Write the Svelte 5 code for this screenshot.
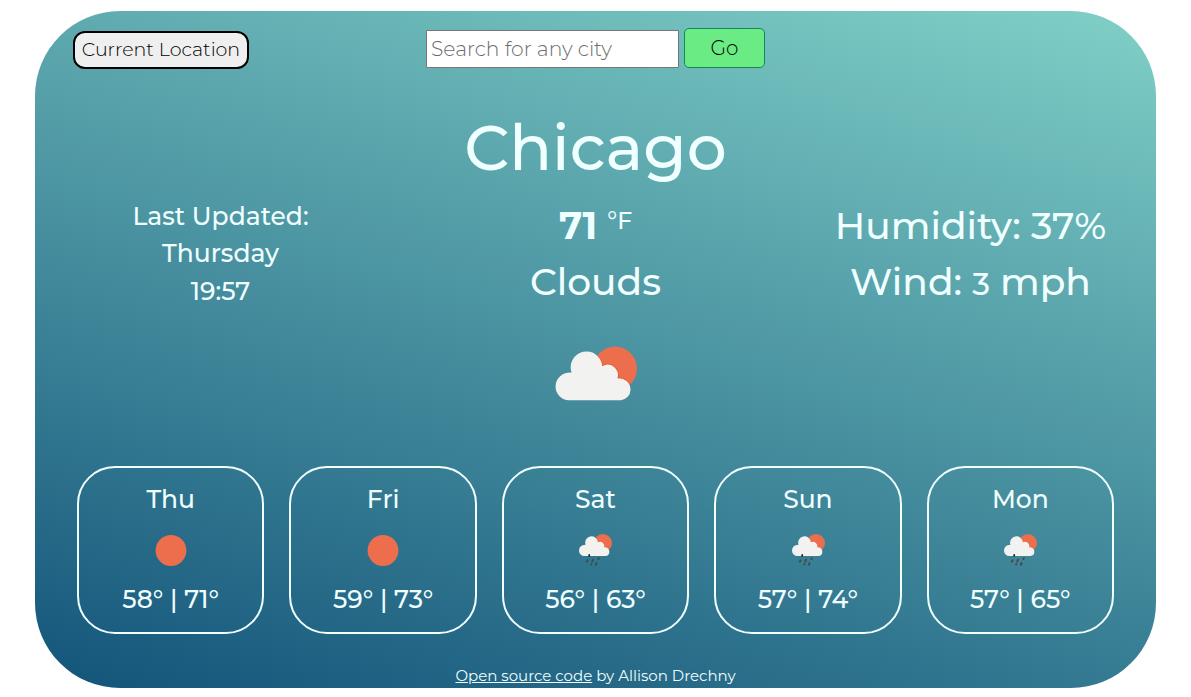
<script>
  const days = [
    { name: 'Thu', icon: 'sun', low: 58, high: 71 },
    { name: 'Fri', icon: 'sun', low: 59, high: 73 },
    { name: 'Sat', icon: 'rain', low: 56, high: 63 },
    { name: 'Sun', icon: 'rain', low: 57, high: 74 },
    { name: 'Mon', icon: 'rain', low: 57, high: 65 },
  ];
  const cloud =
    'M23.500 75A13.800 13.800 0 0 1 22.500 47.500L26.200 47.200A15.800 15.800 0 1 1 56.900 41A10.500 10.500 0 0 1 72.200 53.200A11.500 11.500 0 0 1 85.200 64.500A10.500 10.500 0 0 1 75.500 75Z';
</script>

<main class="app">
  <header class="bar">
    <button class="here">Current Location</button>
    <form class="search">
      <input type="text" placeholder="Search for any city" />
      <button class="go" type="button">Go</button>
    </form>
  </header>

  <h1>Chicago</h1>

  <section class="now">
    <div class="updated">
      <div>Last Updated:</div>
      <div>Thursday</div>
      <div>19:57</div>
    </div>
    <div class="current">
      <div class="temp"><strong>71</strong><span class="unit">°F</span></div>
      <div>Clouds</div>
    </div>
    <div class="air">
      <div>Humidity: 37%</div>
      <div>Wind: <span class="speed">3</span> mph</div>
    </div>
  </section>

  <svg class="weather" width="100" height="100" viewBox="0.7 0.8 100 100">
    <clipPath id="disc"><circle cx="69.700" cy="43.300" r="22" /></clipPath>
    <circle cx="69.700" cy="43.300" r="22" fill="#ec6e4c" />
    <path d={cloud} clip-path="url(#disc)" fill="none" stroke="#e8582f" stroke-width="1.500" />
    <path d={cloud} fill="#f2f2f0" />
  </svg>

  <section class="forecast">
    {#each days as day}
      <article>
        <div>{day.name}</div>
        <svg width="50" height="50" viewBox="0 0 50 50">
          {#if day.icon === 'sun'}
            <circle cx="25" cy="25.500" r="15.400" fill="#ec6e4c" />
          {:else}
            <g transform="translate(.3 .5)">
              <circle cx="32.600" cy="17.600" r="9.100" fill="#ec6e4c" />
              <path d={cloud} transform="translate(4.550 .2) scale(.405)" fill="#f2f2f0" />
              <path
                d="M17.300 34.700l-.8 1.600M22.700 34.100l-.8 2M28.600 32.700l-.5.800M21.100 38.500l-.3.500M26.300 37.500l-.8 1.800"
                fill="none" stroke="#484848" stroke-width="1.800" stroke-linecap="round" />
              <path d="M18.900 29.300v1.200" stroke="#222" stroke-width="1.700" stroke-linecap="round" />
            </g>
          {/if}
        </svg>
        <div>{day.low}° | {day.high}°</div>
      </article>
    {/each}
  </section>

  <footer><a href="#source">Open source code</a> by Allison Drechny</footer>
</main>

<style>
  :global(body) {
    background: #fff;
  }
  .app {
    box-sizing: border-box;
    width: 1121px;
    height: 677px;
    margin: 11px 0 0 35px;
    padding: 17px 42px 0;
    border-radius: 85px;
    background: linear-gradient(15deg, #13547a 0%, #80d0c7 100%);
    color: azure;
    font-family: Montserrat, Inter, sans-serif;
    font-weight: 500;
    display: flex;
    flex-direction: column;
    overflow: hidden;
  }
  .bar {
    display: grid;
    grid-template-columns: 349px auto;
    justify-content: start;
    height: 41px;
  }
  button,
  input {
    box-sizing: border-box;
    font-family: inherit;
    font-weight: 300;
    color: #000;
    margin: 0;
  }
  .here {
    width: 176px;
    height: 38px;
    margin: 3px 0 0 -4px;
    padding: 0 0 1px;
    background: #efefef;
    border: 2px solid #000;
    border-radius: 12px;
    font-size: 19px;
    white-space: nowrap;
  }
  .search {
    display: flex;
    gap: 5px;
  }
  input {
    width: 253px;
    height: 38px;
    margin-top: 2px;
    padding: 0 4px 2px;
    background: #fff;
    border: 1px solid #767676;
    border-radius: 1px;
    font-size: 20.300px;
  }
  input::placeholder {
    color: #6c6c6c;
  }
  .go {
    width: 81px;
    height: 40px;
    padding: 0;
    background: #6aeb83;
    border: 1px solid #198754;
    border-radius: 5px;
    font-size: 20px;
  }
  h1 {
    margin: 40px 0 0;
    font-size: 63px;
    line-height: 78px;
    font-weight: 500;
    text-align: center;
  }
  .now {
    display: grid;
    grid-template-columns: 287px 1fr 287px;
    margin-top: 10.800px;
    height: 114px;
    text-align: center;
  }
  .updated {
    font-size: 25px;
    line-height: 37.5px;
  }
  .current,
  .air {
    font-size: 37.600px;
    line-height: 56.250px;
  }
  .temp {
    display: flex;
    justify-content: center;
    gap: 10px;
  }
  strong {
    font-weight: 700;
  }
  .unit {
    font-size: 23.500px;
    line-height: 46px;
  }
  .speed {
    font-size: 31px;
  }
  .weather {
    align-self: center;
    margin-top: 14px;
    flex: none;
  }
  .forecast {
    display: grid;
    grid-template-columns: repeat(5, 1fr);
    gap: 25px;
    margin-top: 40.200px;
  }
  article {
    box-sizing: border-box;
    height: 168px;
    padding-top: 13px;
    border: 2px solid azure;
    border-radius: 38px;
    display: flex;
    flex-direction: column;
    align-items: center;
    font-size: 25px;
    line-height: 37px;
  }
  article svg {
    margin: 7px 0 6px;
  }
  footer {
    margin-top: 30px;
    text-align: center;
    font-size: 15px;
    font-weight: 400;
    line-height: 24px;
  }
  a {
    color: inherit;
  }
</style>
